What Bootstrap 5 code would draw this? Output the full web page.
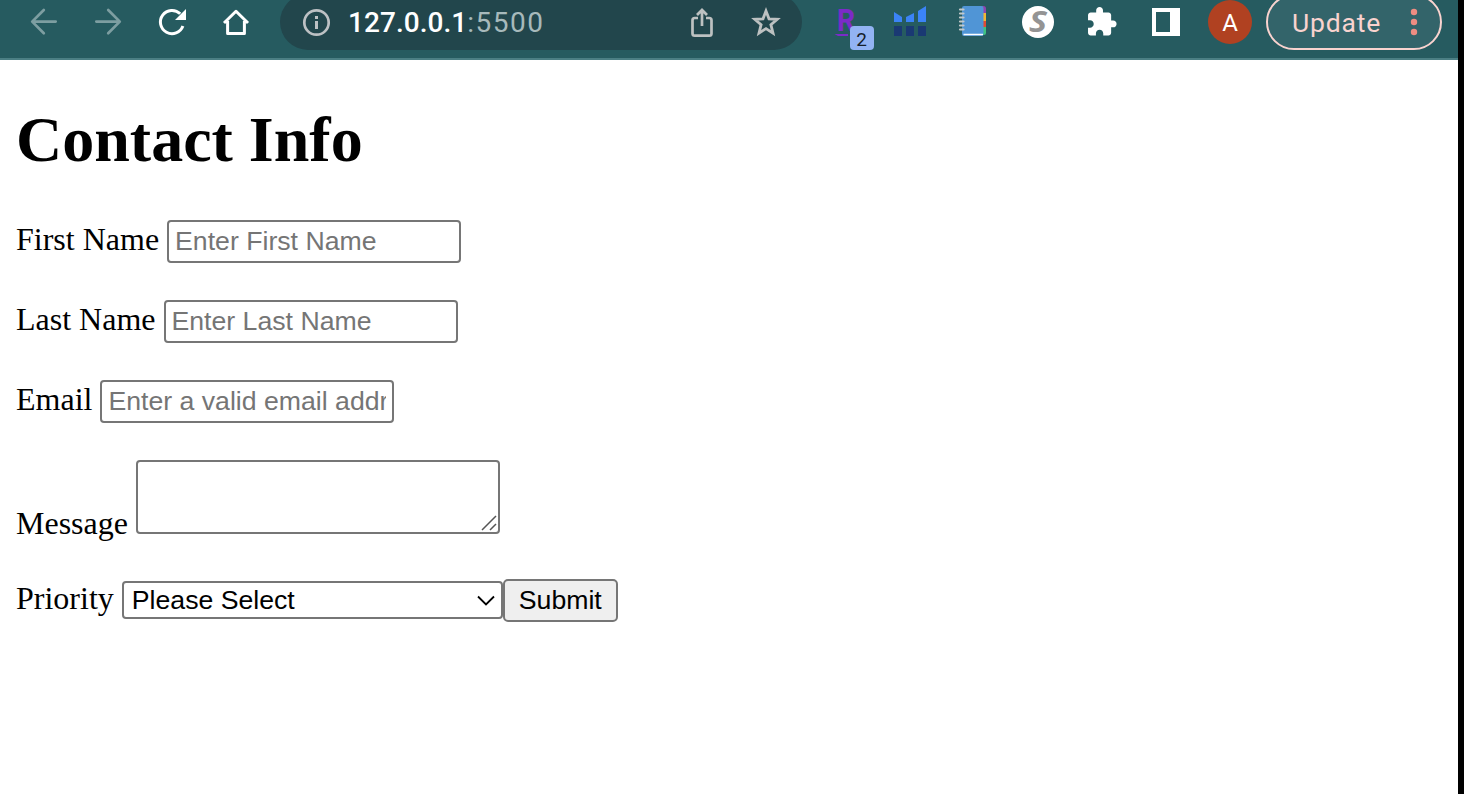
<!DOCTYPE html>
<html lang="en">
<head>
<meta charset="utf-8">
<title>Contact Info</title>
<link rel="stylesheet" href="https://cdn.jsdelivr.net/npm/bootstrap@5.3.0/dist/css/bootstrap.min.css">
<script src="https://cdn.jsdelivr.net/npm/bootstrap@5.3.0/dist/js/bootstrap.bundle.min.js"></script>
<style>
body{background:#000;overflow:hidden}
.win{width:1458px;height:794px}
.chrome{height:60px;background:#265b60;border-bottom:2px solid #4b7f84}
.tools{height:56px;margin-top:-6px;padding-left:12px}
.ico{width:64px;height:56px;flex:none;display:block;fill:none;stroke:none}
.dim{stroke:#7d9ea1;stroke-width:2.7;stroke-linecap:round;stroke-linejoin:round}
.omni{width:522px;height:56px;margin:0 12px;background:#22464c;border-radius:28px;padding-left:4px;padding-right:4px}
.addr{font:500 28px/56px Roboto,sans-serif;letter-spacing:.05px;color:#fff;padding-top:1px}
.addr span{color:#a7b9bb;font-weight:400;letter-spacing:1.5px}
.upd{width:176px;height:56px;margin-left:4px;border:2px solid #f9d3cf;border-radius:28px;background:#33646a;color:#f9d3cf;font:400 26.500px/52px Roboto,sans-serif;letter-spacing:.85px;padding:0 21px 0 24px}
.upd span{padding-top:2px}
.dots circle{fill:#ee8d82}
.page{padding:40px 16px 0;font-family:"Liberation Serif",serif;color:#000;font-size:32px;line-height:36px}
.page h1{font-size:64px;line-height:80px;font-weight:700;margin:0 0 40px;color:#000}
.line{height:43px;margin-bottom:37px;gap:8px}
.line.area{height:74px;margin-bottom:45px}
.lab-ms{margin-bottom:-7px}
.ctl{font:400 26.67px/31px "Liberation Sans",sans-serif;border:2px solid #767676;border-radius:4px;background:#fff;color:#000;padding:4px 6px;width:294px;height:43px;flex:none}
.ctl::placeholder{color:#757575;opacity:1}
.msg{width:364px;height:74px;resize:none;display:block}
.grip{right:1px;bottom:1px}
.lab-pr{margin-top:1px}
.sel{width:381px;height:38px;margin-bottom:1px;padding:0 0 0 8px;line-height:34px;appearance:none}
.sub{width:115px;background:#efefef;border-radius:5px;padding:0 0 1px;line-height:38px}
</style>
</head>
<body>
<div class="win bg-white">
<header class="chrome overflow-hidden">
<div class="tools d-flex align-items-center">
<svg class="ico dim" viewBox="-32 -28 64 56"><path d="M11.7-.4H-11.5M-.2-12-11.8-.4-.2 11.2"/></svg>
<svg class="ico dim" viewBox="-32 -28 64 56"><path d="M-11.7-.4H11.5M.2-12 11.8-.4.2 11.2"/></svg>
<svg class="ico" viewBox="-32 -28 64 56"><path d="M10.9 4A11.6 11.6 0 1 1 8.2-8.2" stroke="#fff" stroke-width="3"/><path d="M14-13V-2H3z" fill="#fff"/></svg>
<svg class="ico" viewBox="-32 -28 64 56"><path d="M-12 1 0-10.7 12 1M-8.4-1V11.4H8.4V-1" stroke="#fff" stroke-width="3" stroke-linejoin="round"/></svg>
<div class="omni d-flex align-items-center">
<svg class="ico" viewBox="-32.5 -28.5 64 56"><circle r="12.2" stroke="#bdc1c4" stroke-width="2.7"/><path d="M0-6.5v3M0-1.5v8" stroke="#bdc1c4" stroke-width="3"/></svg>
<div class="addr flex-grow-1 text-nowrap">127.0.0.1<span>:5500</span></div>
<svg class="ico" viewBox="-32 -28 64 56"><g stroke="#bdc1c1" stroke-width="2.7"><path d="M-4-4H-7.3Q-9.5-4-9.5-1.8V11.4Q-9.5 13.6-7.3 13.6H7.3Q9.5 13.6 9.5 11.4V-1.8Q9.500-4 7.300-4H4M0 4V-11.500M-5-7 0-12 5-7"/></g></svg>
<svg class="ico" viewBox="-32 -28 64 56"><path d="M0-11 3-3.2 11.3-2.7 4.9 2.7 7 11.1 0 6.6-7 11.1-4.900 2.700-11.300-2.700-3-3.200z" stroke="#bdc1c1" stroke-width="2.800"/></svg>
</div>
<svg class="ico" viewBox="-32 -28 64 56"><text x="-9" y="9" font-family="Roboto" font-weight="700" font-size="32" textLength="18" lengthAdjust="spacingAndGlyphs" fill="#7b2bc8">R</text><path d="M-11.500 12H2V14H-8z" fill="#7b2bc8"/><rect x="4" y="4" width="24" height="24" rx="4" fill="#92b3f3"/><text x="15.500" y="24" text-anchor="middle" font-family="Roboto" font-size="19" fill="#16202b">2</text></svg>
<svg class="ico" viewBox="-32 -28 64 56"><path d="M-16-10-8-5V0H-16zM-4-5 4-9V0H-4zM8-11 16-16V0H8z" fill="#3b83f7"/><path d="M-16 4h8V14h-8zM-4 4h8V14h-8zM8 4h8V14H8z" fill="#1a3973"/></svg>
<svg class="ico" viewBox="-32 -28 64 56"><path d="M8-16h1.500q2.500 0 2.500 2.500V-9H8z" fill="#8e44ad"/><path d="M8-9h4v8H8z" fill="#f2b632"/><path d="M8-1h4v6H8z" fill="#e14b35"/><path d="M8 5h4v6q0 2-2 2H8z" fill="#3fc380"/><rect x="-12" y="-16" width="21.500" height="30" rx="2" fill="#5095d6"/><path d="M-10.500 12.500H9" stroke="#fff" stroke-width="1.500"/><path d="M-14-12.500h3.500m-3.500 4h3.500m-3.500 4h3.500m-3.500 4h3.500m-3.500 4h3.500m-3.500 4h3.500" stroke="#c2c9ca" stroke-width="2.200" stroke-linecap="round"/></svg>
<svg class="ico" viewBox="-32 -28 64 56"><circle r="16" fill="#fff"/><text x="-9" y="10.300" textLength="18" lengthAdjust="spacingAndGlyphs" font-family="Open Sans" font-style="italic" font-weight="700" font-size="29" fill="#949494">S</text></svg>
<svg class="ico" viewBox="-32 -28 64 56"><path transform="translate(-16.700 -16.400) scale(1.360)" fill="#fff" d="M20.500 11H19V7c0-1.100-.9-2-2-2h-4V3.500C13 2.120 11.880 1 10.500 1S8 2.120 8 3.500V5H4c-1.100 0-1.990.9-1.990 2v3.800H3.500c1.490 0 2.700 1.210 2.700 2.700s-1.210 2.700-2.700 2.700H2V20c0 1.100.9 2 2 2h3.800v-1.500c0-1.490 1.210-2.700 2.700-2.700 1.490 0 2.700 1.210 2.700 2.700V22H17c1.100 0 2-.9 2-2v-4h1.500c1.380 0 2.500-1.120 2.500-2.500S21.880 11 20.500 11z"/></svg>
<svg class="ico" viewBox="-32 -28 64 56"><path fill="#fff" fill-rule="evenodd" d="M-14-14H14V14H-14zM-10-10V10H4V-10z"/></svg>
<svg class="ico" viewBox="-32 -28 64 56"><circle r="22" fill="#b04121"/><text y="8.800" text-anchor="middle" font-family="Roboto" font-size="24" fill="#fff">A</text></svg>
<div class="upd d-flex align-items-center justify-content-between"><span>Update</span><svg class="dots" width="10" height="32" viewBox="-5 -16 10 32"><circle cy="-10" r="3.200"/><circle r="3.200"/><circle cy="10" r="3.200"/></svg></div>
</div>
</header>
<main class="page">
<h1>Contact Info</h1>
<form>
<div class="line d-flex align-items-baseline"><label for="fn">First Name</label><input class="ctl" id="fn" type="text" placeholder="Enter First Name"></div>
<div class="line d-flex align-items-baseline"><label for="ln">Last Name</label><input class="ctl" id="ln" type="text" placeholder="Enter Last Name"></div>
<div class="line d-flex align-items-baseline"><label for="em">Email</label><input class="ctl" id="em" type="email" placeholder="Enter a valid email address"></div>
<div class="line area d-flex align-items-end"><label for="ms" class="lab-ms">Message</label><div class="position-relative"><textarea class="ctl msg" id="ms"></textarea><svg class="grip position-absolute" width="20" height="20" viewBox="0 0 20 20" fill="none" stroke="#555" stroke-width="1.500"><path d="M3 17 17 3M11 17l6-6"/></svg></div></div>
<div class="line d-flex align-items-start"><label for="pr" class="lab-pr">Priority</label><div class="d-flex align-items-center"><div class="position-relative"><select class="ctl sel d-block" id="pr"><option>Please Select</option></select><svg class="position-absolute top-50 end-0 translate-middle-y me-2" width="18" height="12" viewBox="0 0 18 12" fill="none" stroke="#000" stroke-width="1.800"><path d="M1 1.500l8 8 8-8"/></svg></div><button type="button" class="ctl sub">Submit</button></div></div>
</form>
</main>
</div>
</body>
</html>
